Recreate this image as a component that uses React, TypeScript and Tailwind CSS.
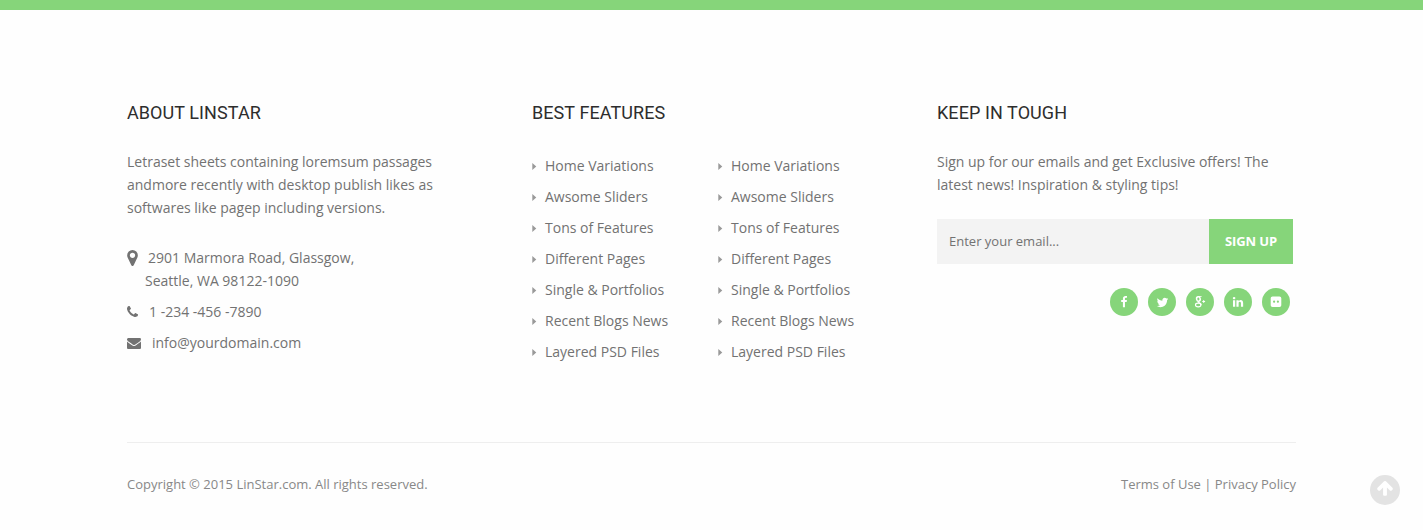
const MARKER =
  "M1152 640q0-106-75-181t-181-75-181 75-75 181 75 181 181 75 181-75 75-181zm256 0q0 109-33 179l-364 774q-16 33-47.500 52t-67.500 19-67.500-19-46.500-52l-365-774q-33-70-33-179 0-212 150-362t362-150 362 150 150 362z";
const PHONE =
  "M1600 1240q0 27-10 70.500t-21 68.500q-21 50-122 106-94 51-186 51-27 0-53-3.500t-57.500-12.500-47-14.500-55.500-20.500-49-18q-98-35-175-83-127-79-264-216t-216-264q-48-77-83-175-3-9-18-49t-20.500-55.500-14.500-47-12.500-57.500-3.500-53q0-92 51-186 56-101 106-122 25-11 68.500-21t70.500-10q14 0 21 3 18 6 53 76 11 19 30 54t35 63.500 31 53.500q3 4 17.500 25t21.500 35.500 7 28.500q0 20-28.500 50t-62 55-62 53-28.500 46q0 9 5 22.500t8.500 20.500 14 24 11.500 19q76 137 174 235t235 174q2 1 19 11.500t24 14 20.500 8.500 22.500 5q18 0 46-28.500t53-62 55-62 50-28.500q14 0 28.500 7t35.500 21.500 25 17.500q25 15 53.500 31t63.500 35 54 30q70 35 76 53 3 7 3 21z";
const ENVELOPE =
  "M1792 710v794q0 66-47 113t-113 47h-1472q-66 0-113-47t-47-113v-794q44 49 101 87 362 246 497 345 57 42 92.500 65.500t94.500 48 110 24.500h2q51 0 110-24.500t94.500-48 92.500-65.500q170-123 498-345 57-39 100-87zm0-294q0 79-49 151t-122 123q-376 261-468 325-10 7-42.500 31t-54 38.500-52 32.500-57.500 27-50 9h-2q-23 0-50-9t-57.500-27-52-32.500-54-38.500-42.500-31q-91-64-262-182.500t-205-142.500q-62-42-117-115.500t-55-136.500q0-78 41.500-130t118.500-52h1472q65 0 112.500 47t47.500 113z";
const FACEBOOK =
  "M1343 12v264h-157q-86 0-116 36t-30 108v189h293l-39 296h-254v759h-306v-759h-255v-296h255v-218q0-186 104-288.500t277-102.500q147 0 228 12z";
const TWITTER =
  "M1684 408q-67 98-162 167 1 14 1 42 0 130-38 259.500t-115.500 248.500-184.500 210.500-258 146-323 54.500q-271 0-496-145 35 4 78 4 225 0 401-138-105-2-188-64.500t-114-159.500q33 5 61 5 43 0 85-11-112-23-185.500-111.500t-73.500-205.500v-4q68 38 146 41-66-44-105-115t-39-154q0-88 44-163 121 149 294.500 238.500t371.500 99.500q-8-38-8-74 0-134 94.500-228.500t228.500-94.500q140 0 236 102 109-21 205-78-37 115-142 178 93-10 186-50z";
const LINKEDIN =
  "M477 625v991h-330v-991h330zm21-306q1 73-50.500 122t-135.500 49h-2q-82 0-132-49t-50-122q0-74 51.500-122.500t134.500-48.500 133 48.500 51 122.500zm1166 729v568h-329v-530q0-105-40.500-164.500t-126.500-59.500q-63 0-105.500 34.500t-63.500 85.500q-11 30-11 81v553h-329q2-399 2-647t-1-296l-1-48h329v144h-2q20-32 41-56t56.500-52 87-43.500 114.500-15.500q171 0 275 113.500t104 332.500z";
const ARROW_UP =
  "M1675 971q0 51-37 90l-75 75q-38 38-91 38-54 0-90-38l-294-293v704q0 52-37.500 84.500t-90.500 32.500h-128q-53 0-90.500-32.500t-37.500-84.500v-704l-294 293q-36 38-90 38t-90-38l-75-75q-38-38-38-90 0-53 38-91l651-651q35-37 90-37 54 0 91 37l651 651q37 39 37 91z";

function Glyph({ d, className, viewBox = "0 0 1792 1792" }: { d: string; className: string; viewBox?: string }) {
  return (
    <svg viewBox={viewBox} className={`shrink-0 fill-current ${className}`}>
      <path d={d} />
    </svg>
  );
}

function GooglePlus() {
  return (
    <svg viewBox="0 0 14 14" className="size-[14px]" fill="none" stroke="currentColor">
      <ellipse cx="5.400" cy="4" rx="1.800" ry="2.200" strokeWidth="1.500" transform="rotate(-12 5.400 4)" />
      <path d="M5.200 1.500h3.400" strokeWidth=".8" />
      <path d="M5.400 6.300q-.6.900.5 1.500" strokeWidth="1.200" />
      <ellipse cx="5.200" cy="10" rx="2.700" ry="1.800" strokeWidth="1.200" />
      <path d="M5.900 7.700q2.100 1 2.100 2.300" strokeWidth="1.400" />
      <path d="M9.300 6.500h2.800M10.700 5.100v2.800" strokeWidth="1" />
    </svg>
  );
}

function Flickr() {
  return (
    <svg viewBox="0 0 12 12" className="size-3">
      <path
        fill="currentColor"
        fillRule="evenodd"
        d="M2.500.5h7a1.800 1.800 0 0 1 1.800 1.800v6.900a1.800 1.800 0 0 1-1.800 1.800h-7a1.800 1.800 0 0 1-1.800-1.800v-6.900a1.800 1.800 0 0 1 1.800-1.800zM4.100 4.600a1.100 1.100 0 1 0 0 2.200 1.100 1.100 0 0 0 0-2.200zM7.900 4.600a1.100 1.100 0 1 0 0 2.200 1.100 1.100 0 0 0 0-2.200z"
      />
    </svg>
  );
}

const links = [
  "Home Variations",
  "Awsome Sliders",
  "Tons of Features",
  "Different Pages",
  "Single & Portfolios",
  "Recent Blogs News",
  "Layered PSD Files",
];

function LinkList() {
  return (
    <ul className="w-[186px] pt-[4px]">
      {links.map((l) => (
        <li key={l} className="flex h-[31px] items-start leading-[23px]">
          <svg viewBox="0 0 5 8" className="mt-[9px] mr-2 h-[7px] w-[5px] fill-[#999]">
            <path d="M0 0l4.500 4-4.500 4z" />
          </svg>
          <a>{l}</a>
        </li>
      ))}
    </ul>
  );
}

function Heading({ children }: { children: string }) {
  return (
    <h4 className="font-[Roboto,sans-serif] text-[18px] leading-[22px] tracking-[0.08px] text-[#2d2d2d]">{children}</h4>
  );
}

const social = [
  <Glyph key="facebook" d={FACEBOOK} className="size-3" />,
  <Glyph key="twitter" d={TWITTER} className="size-[13px]" />,
  <GooglePlus key="google" />,
  <Glyph key="linkedin" d={LINKEDIN} className="size-3" />,
  <Flickr key="flickr" />,
];

export default function App() {
  return (
    <div className="relative h-[530px] w-full overflow-hidden bg-[#fefefe] font-['Open_Sans',sans-serif] text-[14px] leading-[23px] text-[#727272]">
      <div className="h-[10px] bg-[#86d57a]" />
      <footer className="ml-[127px] w-[1169px] pt-[92px]">
        <div className="flex h-[340px]">
          <section className="w-[405px]">
            <Heading>ABOUT LINSTAR</Heading>
            <p className="mt-[26px]">
              Letraset sheets containing loremsum passages
              <br />
              andmore recently with desktop publish likes as
              <br />
              softwares like pagep including versions.
            </p>
            <div className="mt-[27px] flex">
              <Glyph d={MARKER} viewBox="384 128 1024 1536" className="mt-1 mr-[10px] h-4 w-[11px]" />
              <span>2901 Marmora Road, Glassgow,</span>
            </div>
            <div className="pl-[18px]">Seattle, WA 98122-1090</div>
            <div className="mt-2 flex">
              <Glyph d={PHONE} viewBox="192 128 1408 1408" className="mt-[6px] mr-[11px] size-[11px]" />
              <span>1 -234 -456 -7890</span>
            </div>
            <div className="mt-2 flex">
              <Glyph d={ENVELOPE} className="mt-[5px] mr-[11px] size-[14px]" />
              <span>info@yourdomain.com</span>
            </div>
          </section>
          <section className="w-[405px]">
            <Heading>BEST FEATURES</Heading>
            <div className="mt-[26px] flex">
              <LinkList />
              <LinkList />
            </div>
          </section>
          <section className="w-[356px]">
            <Heading>KEEP IN TOUGH</Heading>
            <p className="mt-[26px]">
              Sign up for our emails and get Exclusive offers! The
              <br />
              latest news! Inspiration & styling tips!
            </p>
            <div className="mt-[23px] flex h-[45px]">
              <div className="w-[272px] bg-[#f3f3f3] pl-3 text-[13px] leading-[45px]">Enter your email...</div>
              <button className="w-[84px] bg-[#86d57a] text-[13px] font-bold tracking-[-0.1px] text-white">SIGN UP</button>
            </div>
            <div className="mt-6 flex justify-end gap-[10px] pr-[3px]">
              {social.map((icon, i) => (
                <span key={i} className="flex size-7 items-center justify-center rounded-full bg-[#86d57a] text-white">
                  {icon}
                </span>
              ))}
            </div>
          </section>
        </div>
        <div className="flex justify-between border-t border-[#eee] pt-[30px] text-[13px] text-[#888]">
          <span>Copyright © 2015 LinStar.com. All rights reserved.</span>
          <span>Terms of Use | Privacy Policy</span>
        </div>
      </footer>
      <div className="absolute top-[475px] left-[1370px] flex size-[30px] items-start justify-center rounded-full bg-[#e3e3e3] pt-[4px] text-white">
        <Glyph d={ARROW_UP} className="size-[18px]" />
      </div>
    </div>
  );
}
